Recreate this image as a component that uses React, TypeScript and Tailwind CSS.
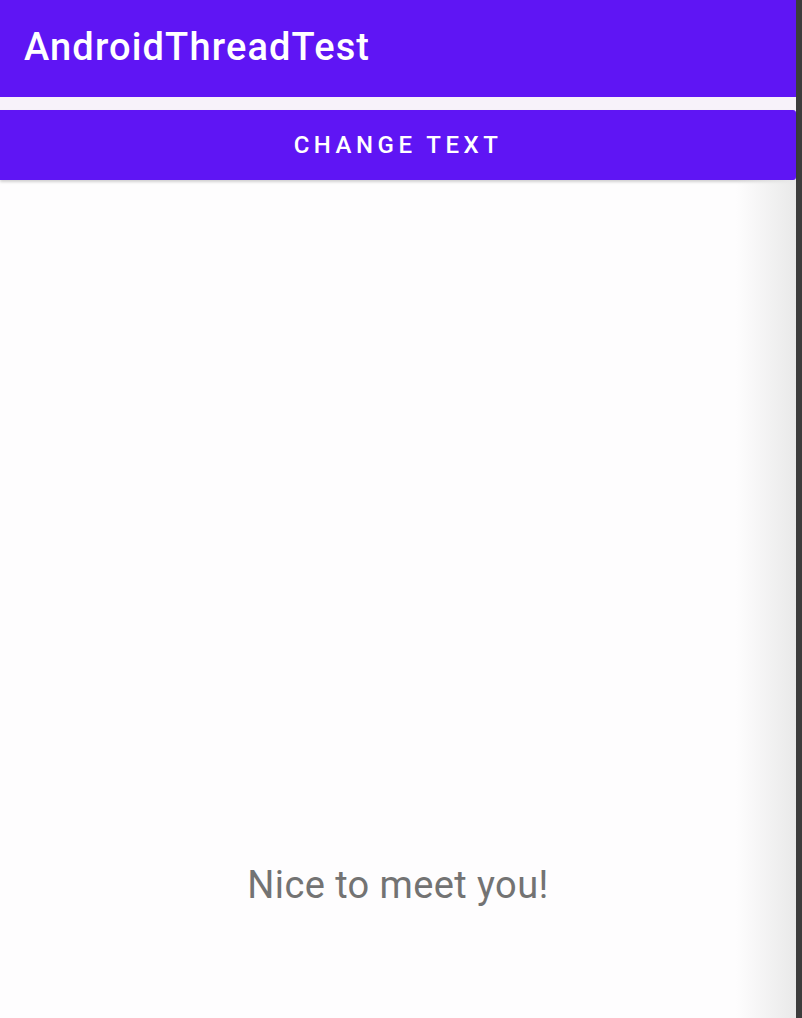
import React from "react";

export default function App() {
  return (
    <div className="flex w-[802px] h-[1018px] bg-[#3c3c3c] overflow-hidden" style={{ fontFamily: "Roboto, 'Noto Sans', sans-serif" }}>
      <div className="relative flex flex-col w-[796px] h-full bg-[#fefdfe]">
        <div className="h-[97px] bg-[#5f15f4] flex items-center pl-[24px]">
          <span className="text-white text-[38px] font-medium leading-none tracking-[1.15px] -mt-[4px]">AndroidThreadTest</span>
        </div>
        <div className="h-[13px] bg-[#f7f2fa]" />
        <div className="h-[70px] bg-[#5f15f4] rounded-r-[3px] flex items-center justify-center shadow-[0_2px_3px_rgba(0,0,0,0.18)]">
          <span className="text-white text-[24px] font-medium tracking-[4.5px] leading-none">CHANGE TEXT</span>
        </div>
        <div className="flex-1 flex flex-col items-center">
          <span className="mt-[686px] text-[#737373] text-[38px] leading-none tracking-[0.4px]">Nice to meet you!</span>
        </div>
        <div className="absolute right-0 top-[180px] bottom-0 w-[60px] bg-gradient-to-r from-transparent to-[#e9e9e9]" />
      </div>
    </div>
  );
}
